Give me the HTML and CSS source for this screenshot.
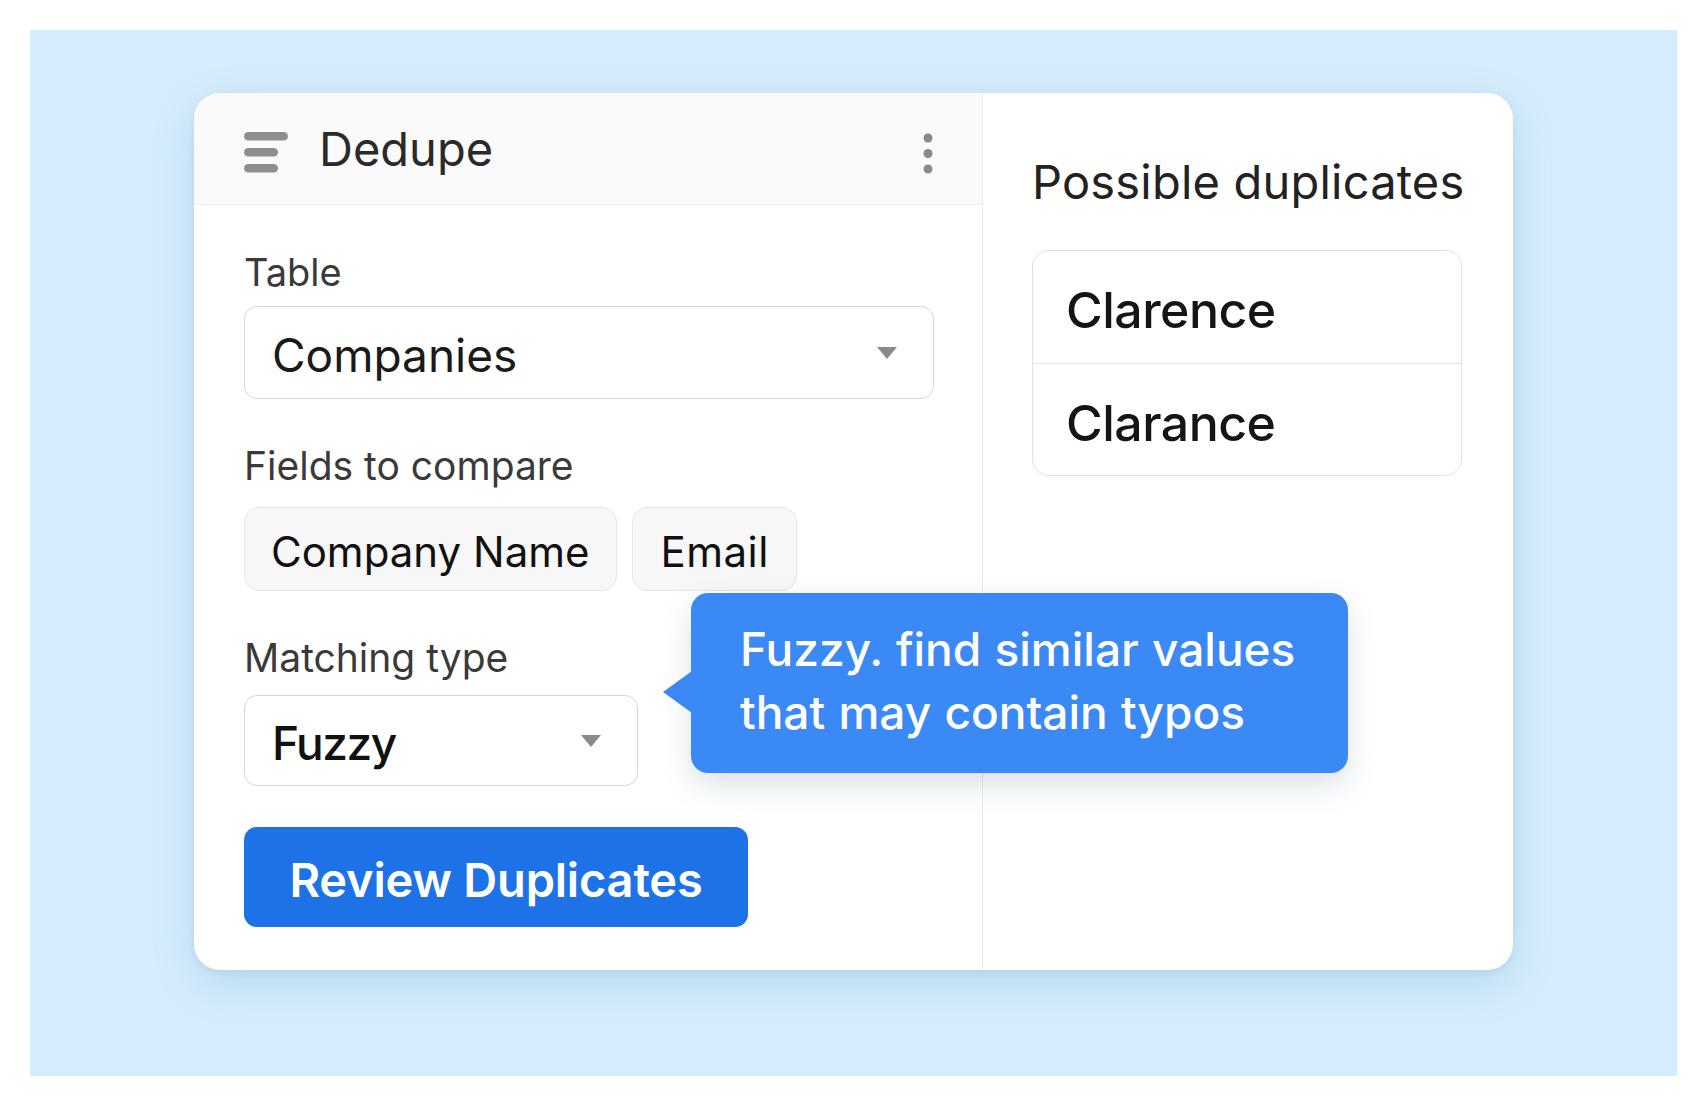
FILE: index.html
```html
<!DOCTYPE html>
<html lang="en">
<head>
<meta charset="utf-8">
<title>Dedupe</title>
<link rel="stylesheet" href="styles.css">
</head>
<body>
<div class="frame">
  <div class="card">
    <section class="left">
      <header class="head">
        <svg class="menu" width="44" height="41" viewBox="0 0 44 41">
          <rect x="0" y="0" width="44" height="8.5" rx="4.25" fill="#8e8e8e"/>
          <rect x="0" y="16" width="34" height="8.5" rx="4.25" fill="#8e8e8e"/>
          <rect x="0" y="32" width="34" height="8.5" rx="4.25" fill="#8e8e8e"/>
        </svg>
        <h1 class="title">Dedupe</h1>
        <svg class="kebab" width="10" height="42" viewBox="0 0 10 42">
          <circle cx="5" cy="5" r="4.5" fill="#8a8a8a"/>
          <circle cx="5" cy="20.5" r="4.5" fill="#8a8a8a"/>
          <circle cx="5" cy="36" r="4.5" fill="#8a8a8a"/>
        </svg>
      </header>
      <div class="body">
        <div class="label first">Table</div>
        <div class="select wide">
          <span class="value">Companies</span>
          <span class="caret"></span>
        </div>
        <div class="label">Fields to compare</div>
        <div class="chips">
          <span class="chip">Company Name</span>
          <span class="chip email">Email</span>
        </div>
        <div class="label">Matching type</div>
        <div class="select narrow">
          <span class="value strong">Fuzzy</span>
          <span class="caret"></span>
        </div>
        <button class="primary">Review Duplicates</button>
      </div>
    </section>
    <section class="right">
      <h2 class="subtitle">Possible duplicates</h2>
      <div class="list">
        <div class="row">Clarence</div>
        <div class="row">Clarance</div>
      </div>
    </section>
    <div class="tooltip">Fuzzy. find similar values<br>that may contain typos</div>
  </div>
</div>
</body>
</html>
```

FILE: styles.css
```css
* { box-sizing: border-box; }
html, body { margin: 0; padding: 0; background: #ffffff; }
body { font-family: "Inter", "Roboto", "Liberation Sans", sans-serif; color: #1a1a1a; }

.frame {
  margin: 30px;
  height: 1046px;
  background: #d4edfc;
  display: flex;
  align-items: flex-start;
  padding: 63px 0 0 164px;
}

.card {
  position: relative;
  width: 1319px;
  height: 877px;
  background: #ffffff;
  border-radius: 26px;
  box-shadow: 0 14px 40px rgba(90, 140, 180, 0.22), 0 2px 6px rgba(90, 140, 180, 0.10);
  display: grid;
  grid-template-columns: 789px 1fr;
}

.left {
  border-right: 1.5px solid #e9e9e9;
  display: flex;
  flex-direction: column;
}

.head {
  height: 112px;
  background: #fafafa;
  border-bottom: 1.5px solid #ededed;
  border-top-left-radius: 26px;
  display: flex;
  align-items: center;
  padding: 0 49px 0 50px;
}
.menu { display: block; margin-top: 8px; }
.title {
  margin: 0 0 0 31px;
  font-size: 47px;
  font-weight: 400;
  color: #2a2a2a;
  letter-spacing: 0;
}
.kebab { display: block; margin-left: auto; margin-top: 10px; }

.body {
  padding: 0 50px;
  display: flex;
  flex-direction: column;
  align-items: flex-start;
}

.label {
  font-size: 39px;
  line-height: 46px;
  color: #3a3a3a;
  margin-top: 44px;
  letter-spacing: 0;
  white-space: nowrap;
}
.label.first { margin-top: 44px; font-size: 38px; }

.select {
  height: 93px;
  border: 1.5px solid #d6d6d6;
  border-radius: 13px;
  background: #fff;
  display: flex;
  align-items: center;
  padding: 0 36px 0 27px;
}
.select.wide { width: 690px; margin-top: 11px; }
.select.narrow { width: 394px; height: 91px; margin-top: 14px; }
.value {
  font-size: 46px;
  color: #1a1a1a;
  letter-spacing: 0;
  margin-top: 4px;
}
.value.strong { font-weight: 500; color: #111; letter-spacing: -1.5px; }
.caret {
  margin-left: auto;
  width: 0;
  height: 0;
  border-left: 10px solid transparent;
  border-right: 10px solid transparent;
  border-top: 12px solid #8a8a8a;
}

.chips {
  margin-top: 18px;
  display: flex;
  gap: 15px;
}
.chip {
  height: 84px;
  padding: 4px 26px 0 26px;
  display: flex;
  align-items: center;
  background: #f7f7f7;
  border: 1.5px solid #e6e6e6;
  border-radius: 15px;
  font-size: 42px;
  color: #111;
  letter-spacing: 0;
  white-space: nowrap;
}
.chip.email { padding: 4px 27px 0 28px; letter-spacing: 0.5px; }

.primary {
  margin-top: 41px;
  width: 504px;
  height: 100px;
  border: none;
  border-radius: 13px;
  background: #1c72e6;
  color: #fff;
  font-family: inherit;
  font-size: 47px;
  font-weight: 600;
  letter-spacing: -0.2px;
  padding: 4px 0 0 0;
}

.right {
  padding: 61px 40px 0 49px;
}
.subtitle {
  margin: 0;
  font-size: 47px;
  line-height: 56px;
  font-weight: 400;
  color: #222;
  letter-spacing: 0.2px;
  white-space: nowrap;
}
.list {
  margin-top: 40px;
  margin-right: 11px;
  border: 1.5px solid #e2e2e2;
  border-radius: 17px;
  overflow: hidden;
}
.row {
  height: 112px;
  display: flex;
  align-items: center;
  padding: 6px 0 0 33px;
  font-size: 50px;
  font-weight: 500;
  color: #151515;
  letter-spacing: -0.5px;
}
.row + .row { border-top: 1.5px solid #e6e6e6; }

.tooltip {
  position: absolute;
  left: 497px;
  top: 500px;
  width: 657px;
  height: 180px;
  background: #3b89f4;
  border-radius: 17px;
  color: #fff;
  font-size: 46px;
  line-height: 63px;
  font-weight: 500;
  letter-spacing: 0;
  word-spacing: 1px;
  padding: 25px 30px 0 49px;
  box-shadow: 0 12px 30px rgba(60, 90, 130, 0.18);
  white-space: nowrap;
}
.tooltip::before {
  content: "";
  position: absolute;
  left: -28px;
  top: 78px;
  width: 0;
  height: 0;
  border-top: 21px solid transparent;
  border-bottom: 21px solid transparent;
  border-right: 29px solid #3b89f4;
}
```
